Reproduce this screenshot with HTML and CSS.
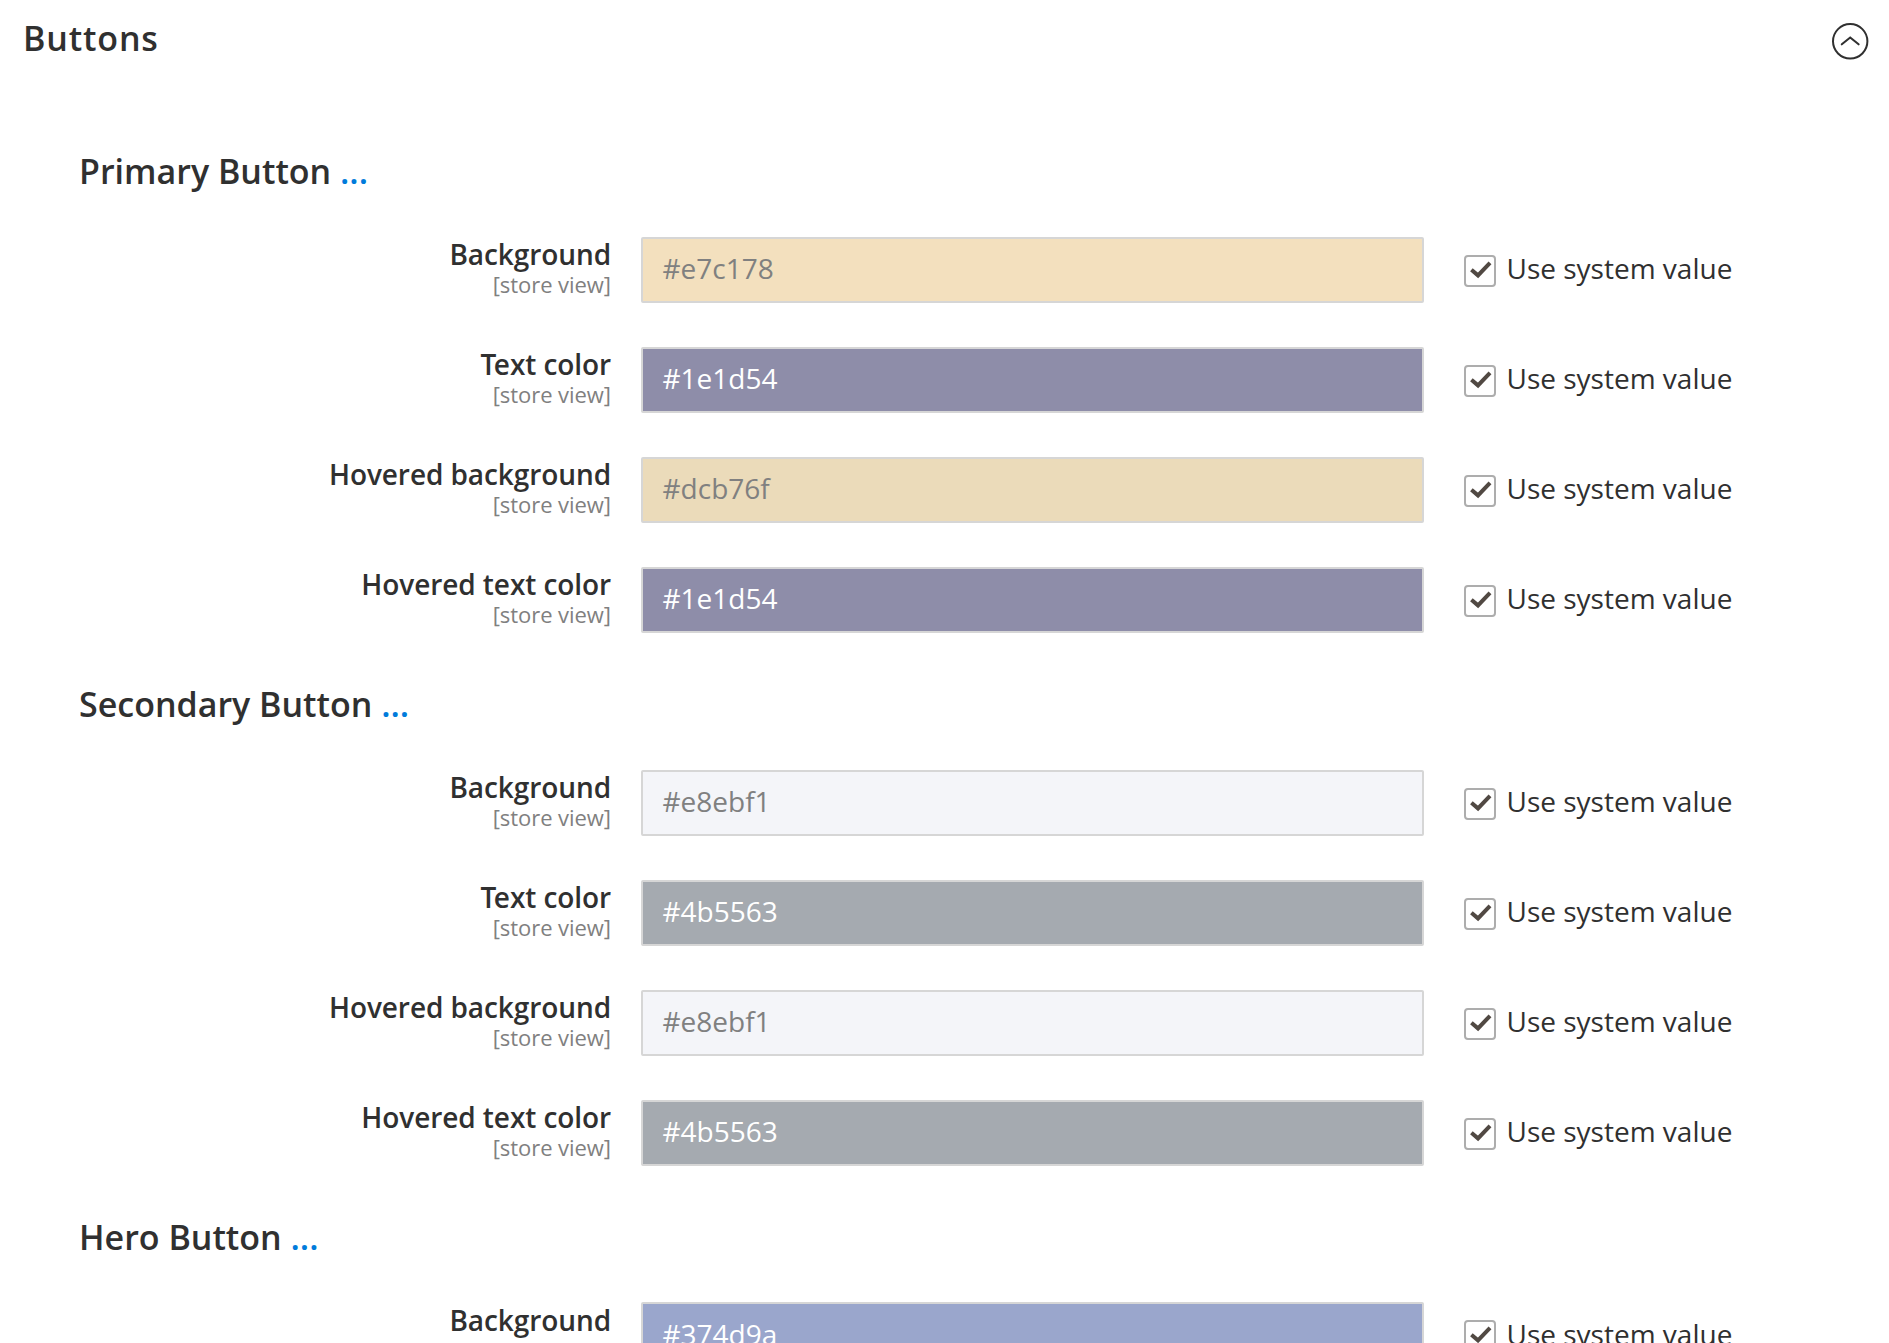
FILE: index.html
```html
<!DOCTYPE html>
<html lang="en">
<head>
<meta charset="utf-8">
<title>Buttons</title>
<link rel="stylesheet" href="styles.css">
<script src="fields.js" defer></script>
</head>
<body>
<svg class="sprite" width="0" height="0" aria-hidden="true">
  <symbol id="tick" viewBox="0 0 32 32"><path d="M7.4 14.8 14 20.4 26 7.8" fill="none" stroke="#514943" stroke-width="4"/></symbol>
</svg>
<main class="panel">
  <header class="panel-head">
    <h1 class="panel-title">Buttons</h1>
    <svg class="collapse" viewBox="0 0 38 38" fill="none" stroke="#303030">
      <circle cx="19.2" cy="19.3" r="17.2" stroke-width="2"/>
      <path d="M10.8 22.3 19.2 15.5 27.6 22.3" stroke-width="2.1" stroke-linecap="round"/>
    </svg>
  </header>
  <div class="groups" id="groups"></div>
</main>
</body>
</html>
```
FILE: styles.css
```css
* { box-sizing: border-box; }

body {
  margin: 0;
  height: 1343px;
  overflow: hidden;
  background: #fff;
  color: #303030;
  font-family: "Open Sans", "Noto Sans", sans-serif;
  font-size: 28px;
}

.sprite { display: block; width: 0; height: 0; }

.panel { height: 1343px; overflow: hidden; }

.panel-head {
  display: flex;
  justify-content: space-between;
  align-items: flex-start;
  height: 146px;
  padding: 15px 20px 0 23px;
}

.panel-title {
  margin: 0;
  font-size: 34px;
  font-weight: 600;
  line-height: 46px;
  letter-spacing: 0.85px;
}

.collapse { width: 38px; height: 38px; margin-top: 7px; }

.group { height: 532.7px; }

.group-title {
  margin: 0;
  padding: 0.3px 0 0 79px;
  height: 91px;
  font-size: 34px;
  font-weight: 600;
  line-height: 50.8px;
}

.more { color: #007bdb; }

.rows { display: grid; gap: 44px; }

.row {
  display: grid;
  grid-template-columns: 611px 783px auto;
  column-gap: 30px;
  height: 66px;
}

.label { text-align: right; padding-top: 1.3px; }

.name {
  display: block;
  font-weight: 600;
  line-height: 32px;
  letter-spacing: -0.08px;
}

.name.capital-t::first-letter { letter-spacing: -2.4px; }

.scope {
  display: block;
  font-size: 22px;
  line-height: 28px;
  letter-spacing: -0.05px;
  color: #808080;
}

.value {
  height: 66px;
  padding: 0.3px 19.5px 0;
  border: 2px solid #d6d6d6;
  border-radius: 2px;
  line-height: 58px;
}

.dark-text { color: #808080; }
.light-text { color: #fff; }

.sand { background: #f3e0be; }
.navy { background: #8e8da9; }
.tan { background: #ebdbba; }
.mist { background: #f4f5f9; }
.slate { background: #a5aab0; }
.blue { background: #9aa6cc; }

.system {
  display: flex;
  align-items: flex-start;
  padding: 0.3px 0 0 10px;
  line-height: 62px;
}

.check {
  width: 32px;
  height: 32px;
  margin: 17.7px 10.5px 0 0;
  border: 2px solid #adadad;
  border-radius: 4px;
}

.check svg { display: block; width: 32px; height: 32px; margin: -2px; }
```
FILE: fields.js
```js
const groups = [
  ["Primary Button", [
    ["Background", "#e7c178", "sand dark-text"],
    ["Text color", "#1e1d54", "navy light-text"],
    ["Hovered background", "#dcb76f", "tan dark-text"],
    ["Hovered text color", "#1e1d54", "navy light-text"]]],
  ["Secondary Button", [
    ["Background", "#e8ebf1", "mist dark-text"],
    ["Text color", "#4b5563", "slate light-text"],
    ["Hovered background", "#e8ebf1", "mist dark-text"],
    ["Hovered text color", "#4b5563", "slate light-text"]]],
  ["Hero Button", [
    ["Background", "#374d9a", "blue light-text"]]]
];

const row = ([name, value, tone]) => `
  <div class="row">
    <div class="label"><span class="name${name.startsWith("T") ? " capital-t" : ""}">${name}</span><span class="scope">[store view]</span></div>
    <div class="value ${tone}">${value}</div>
    <div class="system"><span class="check"><svg><use href="#tick"/></svg></span><span>Use system value</span></div>
  </div>`;

document.getElementById("groups").innerHTML = groups.map(([title, rows]) => `
  <section class="group">
    <h2 class="group-title">${title} <span class="more">...</span></h2>
    <div class="rows">${rows.map(row).join("")}</div>
  </section>`).join("");
```
